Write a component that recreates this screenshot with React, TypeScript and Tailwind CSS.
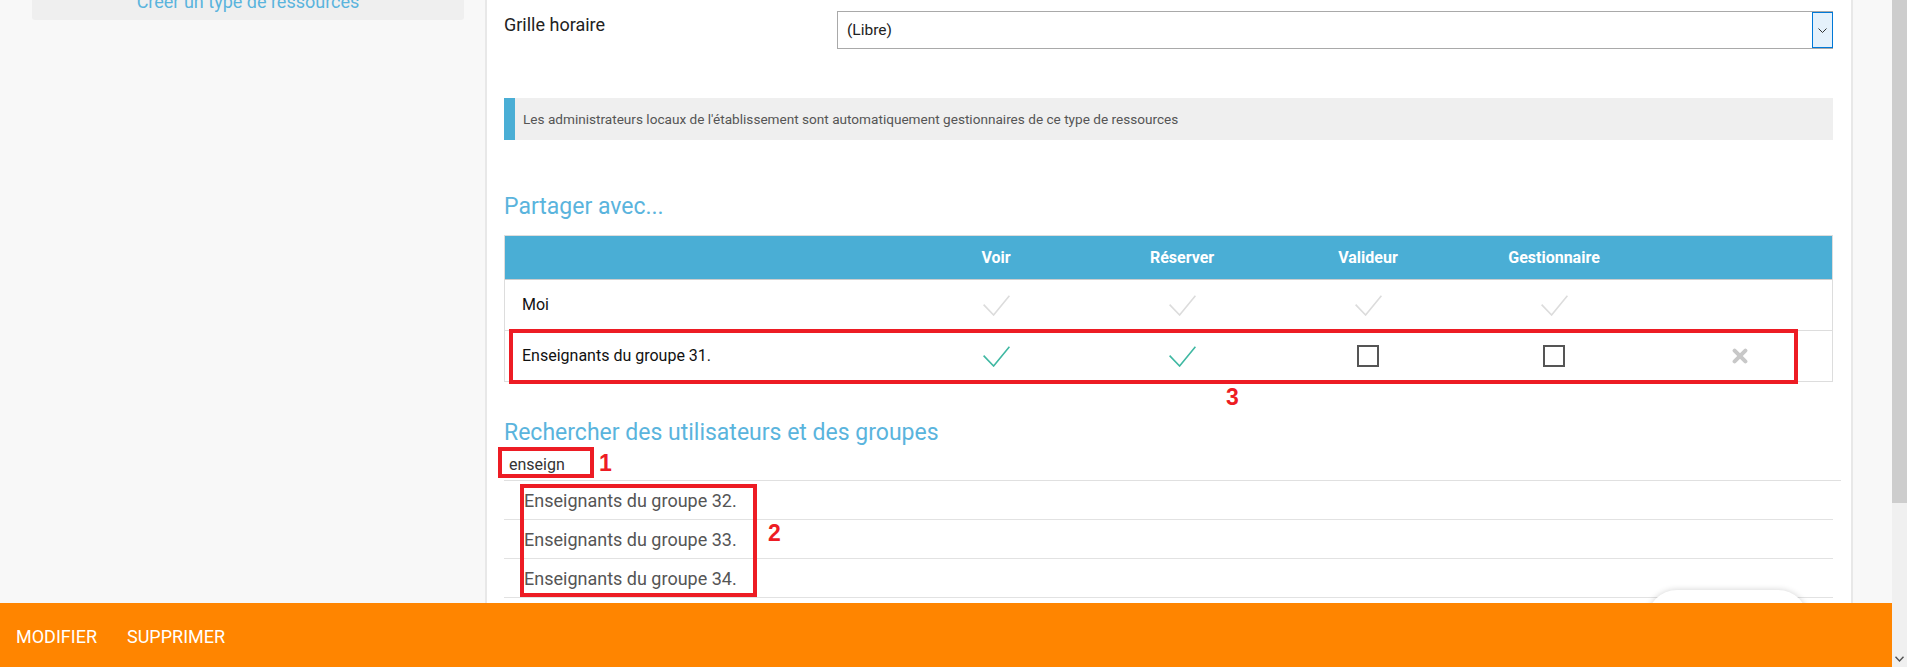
import type { ReactNode } from "react";

const columns = ["Voir", "Réserver", "Valideur", "Gestionnaire"];
const results = ["Enseignants du groupe 32.", "Enseignants du groupe 33.", "Enseignants du groupe 34."];

function Check({ active }: { active?: boolean }) {
  return (
    <svg width="27" height="21" viewBox="0 0 27 21" fill="none">
      <path d="M0.6 9.6 L10.6 20 L26.4 0.8" stroke={active ? "#3fb8a2" : "#dcdcdc"} strokeWidth="1.6" />
    </svg>
  );
}

function Box() {
  return <div className="h-[22px] w-[22px] border-2 border-[#555]" />;
}

function Cross() {
  return (
    <svg width="16" height="16" viewBox="0 0 16 16" fill="none">
      <path d="M2.6 2.6 L13.4 13.4 M13.4 2.6 L2.6 13.4" stroke="#c8c8c8" strokeWidth="4" strokeLinecap="round" />
    </svg>
  );
}

function Row({ label, cells, last }: { label: string; cells: ReactNode[]; last?: boolean }) {
  return (
    <div
      className={
        "grid grid-cols-[398px_186px_186px_186px_186px_1fr] items-center text-[16px] text-[#111] " +
        (last ? "h-[50px]" : "h-[51px] border-b border-[#dddddd]")
      }
    >
      <div className="pl-[17px]">{label}</div>
      {cells.map((c, i) => (
        <div key={i} className="flex justify-center">
          {c}
        </div>
      ))}
    </div>
  );
}

export default function App() {
  return (
    <div className="relative flex h-[667px] w-[1907px] overflow-hidden bg-[#f8f8f8] font-['Roboto',sans-serif]">
      <div className="flex min-w-0 flex-1 flex-col">
        <div className="flex min-h-0 flex-1">
          <aside className="w-[485px] flex-none pl-[32px] pr-[21px]">
            <div className="h-[20px] overflow-hidden rounded-b-[3px] bg-[#efefef] text-center">
              <div className="-mt-[10px] text-[18px] leading-6 text-[#5ab4dd]">Créer un type de ressources</div>
            </div>
          </aside>

          <main className="relative w-[1368px] flex-none border-x-2 border-[#e8e8e8] bg-white pl-[17px] pr-[18px] pt-[11px]">
            <div className="grid grid-cols-[333px_1fr]">
              <div className="pt-[2px] text-[18px] leading-6 text-[#222]">Grille horaire</div>
              <div className="flex h-[38px] items-stretch border border-[#a9a9a9]">
                <div className="flex flex-1 items-center pl-[9px] pt-[2px] text-[15.5px] text-[#222]">(Libre)</div>
                <div className="-mr-px flex w-[21px] items-center justify-center border border-[#0078d7] bg-[#e5f1fb]">
                  <svg width="9" height="5" viewBox="0 0 9 5" fill="none">
                    <path d="M0.5 0.5 L4.5 4.5 L8.5 0.5" stroke="#333" strokeWidth="1" />
                  </svg>
                </div>
              </div>
            </div>

            <div className="mt-[49px] flex h-[42px] items-center border-l-[11px] border-[#4aaed5] bg-[#efefef] pl-[8px] text-[13.6px] text-[#555]">
              Les administrateurs locaux de l'établissement sont automatiquement gestionnaires de ce type de ressources
            </div>

            <h2 className="mt-[53px] text-[23px] leading-[28px] text-[#5ab4dd]">Partager avec...</h2>

            <div className="mt-[14px] border border-[#dddddd]">
              <div className="grid h-[44px] grid-cols-[398px_186px_186px_186px_186px_1fr] items-center border-b border-[#cccccc] bg-[#4aaed5] text-[16px] font-bold text-white">
                <div />
                {columns.map((c) => (
                  <div key={c} className="text-center">
                    {c}
                  </div>
                ))}
                <div />
              </div>
              <Row label="Moi" cells={[<Check />, <Check />, <Check />, <Check />, null]} />
              <Row
                label="Enseignants du groupe 31."
                cells={[<Check active />, <Check active />, <Box />, <Box />, <Cross />]}
                last
              />
            </div>

            <h2 className="mt-[37px] text-[23px] leading-[28px] text-[#5ab4dd]">
              Rechercher des utilisateurs et des groupes
            </h2>
            <div className="flex h-[34px] w-[1337px] items-center border-b border-[#e0e0e0] pl-[5px] pt-[3px] text-[16px] text-[#333]">
              enseign
            </div>
            {results.map((r) => (
              <div
                key={r}
                className="flex h-[39px] items-center border-b border-[#e2e2e2] pl-[20px] text-[18px] text-[#555]"
              >
                {r}
              </div>
            ))}

            <div className="absolute left-[1160px] top-[590px] h-[60px] w-[161px] rounded-[30px] bg-white shadow-[0_0_6px_rgba(0,0,0,0.18)]" />
          </main>
        </div>

        <footer className="relative z-10 flex h-[64px] flex-none items-center gap-[30px] bg-[#ff8500] pl-[16px] pt-[3px] text-[18px] text-white">
          <span>MODIFIER</span>
          <span>SUPPRIMER</span>
        </footer>
      </div>

      <div className="flex w-[15px] flex-none flex-col bg-[#f0f0f0]">
        <div className="h-[503px] bg-[#cdcdcd]" />
        <div className="flex-1" />
        <div className="flex h-[16px] items-center justify-center">
          <svg width="9" height="6" viewBox="0 0 9 6" fill="none">
            <path d="M0.5 0.8 L4.5 5 L8.5 0.8" stroke="#505050" strokeWidth="1.4" />
          </svg>
        </div>
      </div>

      {/* annotations drawn over the screenshot */}
      <div className="absolute left-[498px] top-[447px] h-[31px] w-[96px] border-4 border-[#ed1c24]" />
      <div className="absolute left-[520px] top-[484px] h-[113px] w-[237px] border-4 border-[#ed1c24]" />
      <div className="absolute left-[509px] top-[329px] h-[55px] w-[1289px] border-4 border-[#ed1c24]" />
      <span className="absolute left-[599px] top-[452px] font-['Liberation_Sans',Arial,sans-serif] text-[23px] font-bold leading-none text-[#ed1c24]">
        1
      </span>
      <span className="absolute left-[768px] top-[522px] font-['Liberation_Sans',Arial,sans-serif] text-[23px] font-bold leading-none text-[#ed1c24]">
        2
      </span>
      <span className="absolute left-[1226px] top-[386px] font-['Liberation_Sans',Arial,sans-serif] text-[23px] font-bold leading-none text-[#ed1c24]">
        3
      </span>
    </div>
  );
}
